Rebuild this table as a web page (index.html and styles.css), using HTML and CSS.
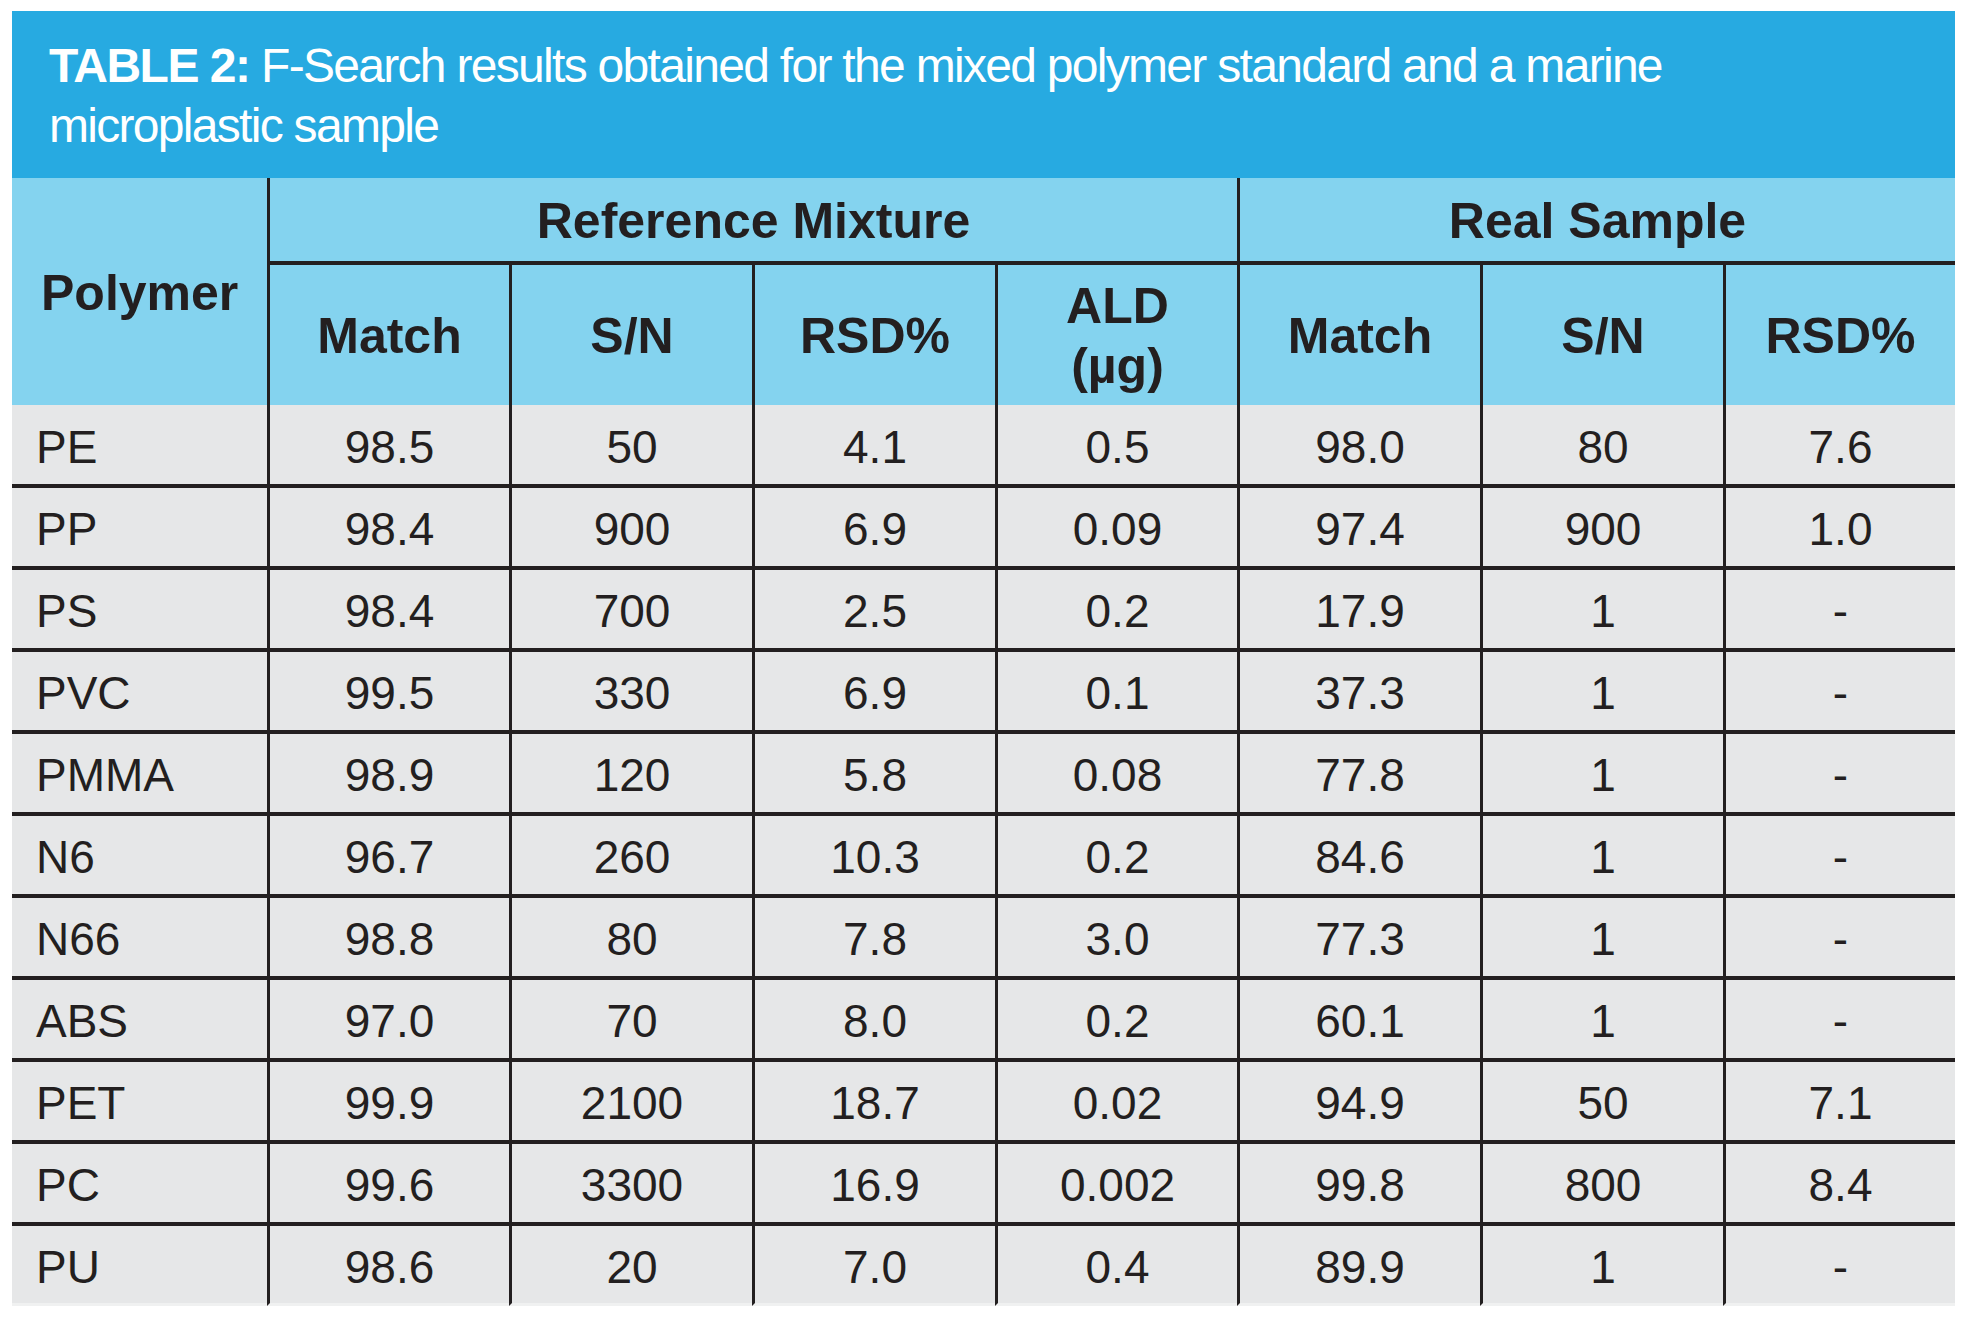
FILE: index.html
```html
<!DOCTYPE html>
<html lang="en">
<head>
<meta charset="utf-8">
<title>TABLE 2</title>
<link rel="stylesheet" href="styles.css">
</head>
<body>
<div class="sheet">
  <div class="caption">
    <p class="caption-line"><b class="label">TABLE 2:</b> F-Search results obtained for the mixed polymer standard and a marine</p>
    <p class="caption-line">microplastic sample</p>
  </div>
  <div class="grid">
    <div class="h poly">Polymer</div>
    <div class="h grp ref">Reference Mixture</div>
    <div class="h grp real">Real Sample</div>
    <div class="h sub">Match</div>
    <div class="h sub">S/N</div>
    <div class="h sub">RSD%</div>
    <div class="h sub two">ALD<br>(µg)</div>
    <div class="h sub">Match</div>
    <div class="h sub">S/N</div>
    <div class="h sub">RSD%</div>

    <div class="c name">PE</div><div class="c">98.5</div><div class="c">50</div><div class="c">4.1</div><div class="c">0.5</div><div class="c">98.0</div><div class="c">80</div><div class="c">7.6</div>
    <div class="c name">PP</div><div class="c">98.4</div><div class="c">900</div><div class="c">6.9</div><div class="c">0.09</div><div class="c">97.4</div><div class="c">900</div><div class="c">1.0</div>
    <div class="c name">PS</div><div class="c">98.4</div><div class="c">700</div><div class="c">2.5</div><div class="c">0.2</div><div class="c">17.9</div><div class="c">1</div><div class="c">-</div>
    <div class="c name">PVC</div><div class="c">99.5</div><div class="c">330</div><div class="c">6.9</div><div class="c">0.1</div><div class="c">37.3</div><div class="c">1</div><div class="c">-</div>
    <div class="c name">PMMA</div><div class="c">98.9</div><div class="c">120</div><div class="c">5.8</div><div class="c">0.08</div><div class="c">77.8</div><div class="c">1</div><div class="c">-</div>
    <div class="c name">N6</div><div class="c">96.7</div><div class="c">260</div><div class="c">10.3</div><div class="c">0.2</div><div class="c">84.6</div><div class="c">1</div><div class="c">-</div>
    <div class="c name">N66</div><div class="c">98.8</div><div class="c">80</div><div class="c">7.8</div><div class="c">3.0</div><div class="c">77.3</div><div class="c">1</div><div class="c">-</div>
    <div class="c name">ABS</div><div class="c">97.0</div><div class="c">70</div><div class="c">8.0</div><div class="c">0.2</div><div class="c">60.1</div><div class="c">1</div><div class="c">-</div>
    <div class="c name">PET</div><div class="c">99.9</div><div class="c">2100</div><div class="c">18.7</div><div class="c">0.02</div><div class="c">94.9</div><div class="c">50</div><div class="c">7.1</div>
    <div class="c name">PC</div><div class="c">99.6</div><div class="c">3300</div><div class="c">16.9</div><div class="c">0.002</div><div class="c">99.8</div><div class="c">800</div><div class="c">8.4</div>
    <div class="c name last">PU</div><div class="c last">98.6</div><div class="c last">20</div><div class="c last">7.0</div><div class="c last">0.4</div><div class="c last">89.9</div><div class="c last">1</div><div class="c last">-</div>
  </div>
</div>
</body>
</html>
```
FILE: styles.css
```css
* {
  box-sizing: border-box;
}

html, body {
  margin: 0;
  padding: 0;
  background: #ffffff;
}

body {
  width: 1972px;
  height: 1318px;
  overflow: hidden;
  font-family: "Liberation Sans", Arial, sans-serif;
  color: #231f20;
}

.sheet {
  margin: 11px 0 0 12px;
  width: 1943px;
}

.caption {
  background: #27aae1;
  color: #ffffff;
  height: 167px;
  padding: 25px 37px 0 37px;
  font-size: 48px;
  line-height: 60px;
  letter-spacing: -1.7px;
}

.caption-line {
  margin: 0;
  white-space: nowrap;
}

.label {
  font-weight: bold;
  letter-spacing: -1.5px;
}

.grid {
  display: grid;
  grid-template-columns: 255px 242px 243px 243px 242px 243px 243px 232px;
  grid-template-rows: 87px 140px 83px repeat(9, 82px) 80px;
}

.h {
  background: #84d3ef;
  font-weight: bold;
  font-size: 50px;
  display: flex;
  align-items: center;
  justify-content: center;
  text-align: center;
  padding-top: 2px;
}

.poly {
  grid-row: 1 / 3;
  grid-column: 1;
  justify-content: flex-start;
  padding-left: 29px;
  padding-top: 3px;
}

.grp {
  border-left: 3px solid #231f20;
  border-bottom: 4px solid #231f20;
}

.ref {
  grid-column: 2 / 6;
}

.real {
  grid-column: 6 / 9;
}

.sub {
  border-left: 3px solid #231f20;
}

.two {
  line-height: 60px;
}

.c {
  background: #e6e7e8;
  font-size: 46px;
  display: flex;
  align-items: center;
  justify-content: center;
  padding-top: 4px;
  border-left: 3px solid #231f20;
  border-bottom: 4px solid #231f20;
}

.c.name {
  border-left: none;
  justify-content: flex-start;
  padding-left: 24px;
}

.c.last {
  border-bottom: 3px solid #f0f1f1;
}
```
